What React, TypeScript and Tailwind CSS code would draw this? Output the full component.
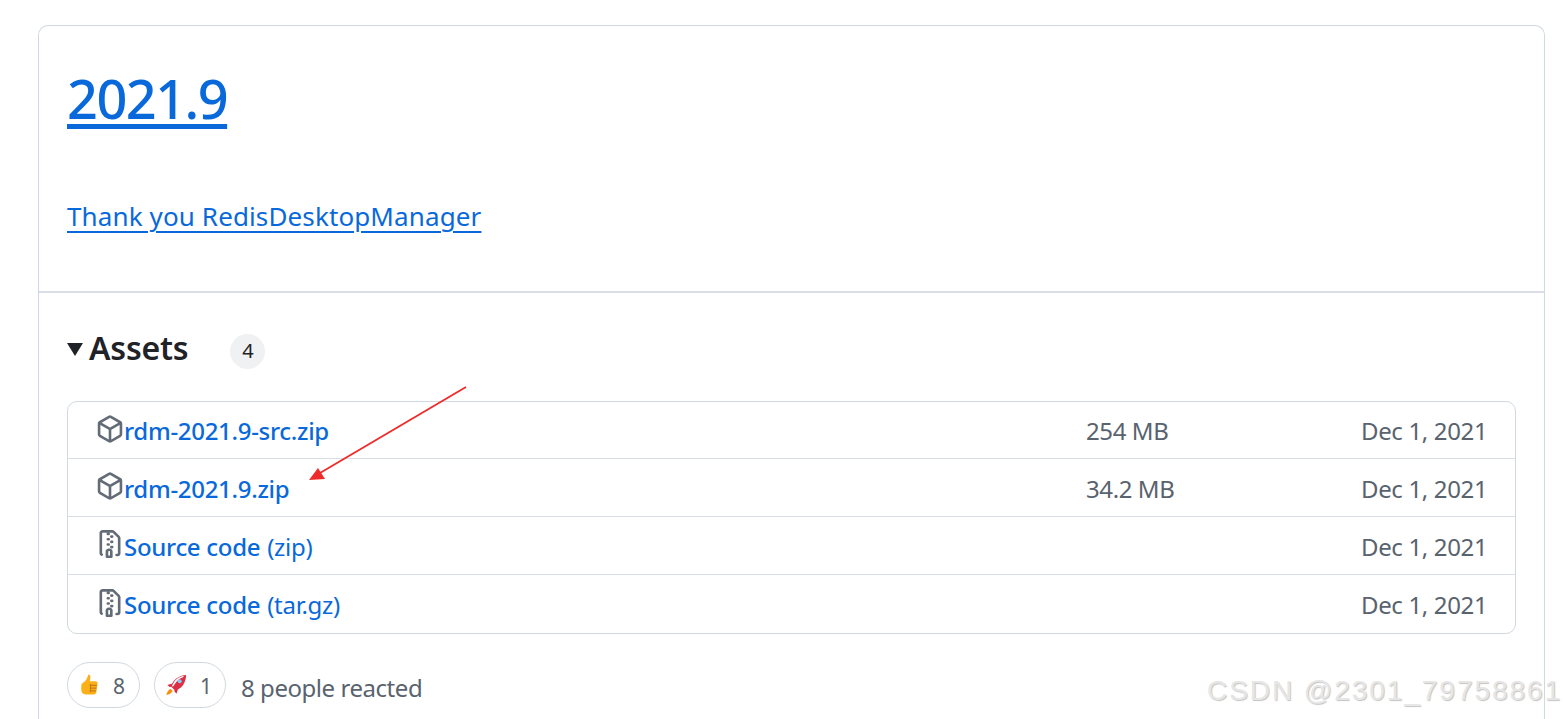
const PKG = "m8.878.392 5.25 3.045c.54.314.872.89.872 1.514v6.098a1.75 1.75 0 0 1-.872 1.514l-5.25 3.045a1.75 1.75 0 0 1-1.756 0l-5.25-3.045A1.75 1.75 0 0 1 1 11.049V4.951c0-.624.332-1.201.872-1.514L7.122.392a1.75 1.75 0 0 1 1.756 0ZM7.875 1.69l-4.63 2.685L8 7.133l4.755-2.758-4.63-2.685a.248.248 0 0 0-.25 0ZM2.5 5.677v5.372c0 .09.047.171.125.216l4.625 2.683V8.432Zm6.25 8.271 4.625-2.683a.25.25 0 0 0 .125-.216V5.677L8.75 8.432Z";
const ZIP = "M3.5 1.75v11.5c0 .09.048.173.126.217a.75.75 0 0 1-.752 1.298A1.748 1.748 0 0 1 2 13.25V1.75C2 .784 2.784 0 3.75 0h5.586c.464 0 .909.185 1.237.513l2.914 2.914c.329.328.513.773.513 1.237v8.586A1.75 1.75 0 0 1 12.25 15h-.5a.75.75 0 0 1 0-1.5h.5a.25.25 0 0 0 .25-.25V4.664a.25.25 0 0 0-.073-.177L9.513 1.573a.25.25 0 0 0-.177-.073H7.25a.75.75 0 0 1 0 1.5h-.5a.75.75 0 0 1 0-1.5h-3a.25.25 0 0 0-.25.25Zm3.75 8.75h.5c.966 0 1.75.784 1.75 1.75v3a.75.75 0 0 1-.75.75h-2.5a.75.75 0 0 1-.75-.75v-3c0-.966.784-1.75 1.75-1.75ZM6 5.25a.75.75 0 0 1 .75-.75h.5a.75.75 0 0 1 0 1.5h-.5A.75.75 0 0 1 6 5.25Zm.75 2.25h.5a.75.75 0 0 1 0 1.5h-.5a.75.75 0 0 1 0-1.5ZM8 6.75A.75.75 0 0 1 8.75 6h.5a.75.75 0 0 1 0 1.5h-.5A.75.75 0 0 1 8 6.75ZM8.75 3h.5a.75.75 0 0 1 0 1.5h-.5a.75.75 0 0 1 0-1.5ZM8 9.75A.75.75 0 0 1 8.75 9h.5a.75.75 0 0 1 0 1.5h-.5A.75.75 0 0 1 8 9.75Zm-1 2.5v2.25h1v-2.25a.25.25 0 0 0-.25-.25h-.5a.25.25 0 0 0-.25.25Z";

const rows = [
  { icon: PKG, name: "rdm-2021.9-src.zip", extra: "", size: "254 MB", h: "h-[56px]" },
  { icon: PKG, name: "rdm-2021.9.zip", extra: "", size: "34.2 MB", h: "h-[58px]" },
  { icon: ZIP, name: "Source code", extra: "(zip)", size: "", h: "h-[58px]" },
  { icon: ZIP, name: "Source code", extra: "(tar.gz)", size: "", h: "h-[59px]" },
];

function Thumb() {
  return (
    <svg viewBox="0 0 20 24" className="w-[19px] h-[22px]">
      <path fill="#fbb018" d="M8.5 1c1.6-.6 2.8.7 2.5 2.4L10.4 8h6.2c1.6 0 2.4 1.2 2.2 2.5l-1.3 9.2c-.3 1.6-1.2 2.6-3 2.6H6c-3 0-5-1.8-5-5v-4c0-2 1-3.3 2.6-4.2C6 7.600 7.500 4.500 8.500 1Z" />
      <path fill="none" stroke="#c77c0e" strokeWidth="1.300" d="M11 12.500h7M11 15.500h6.500M11 18.500h6M11 11v9" />
    </svg>
  );
}

function Rocket() {
  return (
    <svg viewBox="0 0 24 24" className="w-[22px] h-[22px]">
      <path fill="#f4900c" d="M6 16l2.500 2.500C7 21 4.500 22.500 1.500 23c.4-3 2-5.500 4.500-7Z" />
      <path fill="#dd2e44" d="M7 10.500 2.500 12l3 2.500 3-2ZM14 17l-1.500 4.500-2.500-3 2-3Z" />
      <path fill="#dd2e44" d="M23 1c-5.500.2-10 2.500-13.500 6.500L6 13l5.500 5.500 5.500-3.500C21 11.500 23 6.500 23 1Z" />
      <path fill="#f5f8fa" d="M19.500 2.200c-3.500.8-6.500 2.600-9 5.300L7.500 12.700l1.200 1.200 3.600-5.100c2-2.500 4.500-4.400 7.500-5.200l.7-1.400Z" />
      <circle cx="16" cy="8" r="2.200" fill="#88c9f9" />
    </svg>
  );
}

export default function App() {
  return (
    <div className="relative h-[719px] w-[1566px] overflow-hidden bg-white pl-[38px] pt-[25px] font-['Noto_Sans','Open_Sans',sans-serif]">
      <div className="h-[720px] w-[1507px] rounded-t-[10px] border border-b-0 border-[#d1d9e0]">
        <div className="h-[267px] border-b-2 border-[#d8dee4] pl-[28px]">
          <a className="block pt-[36px] text-[54px] leading-[72px] font-medium tracking-[-1.500px] text-[#0969da] underline decoration-[4.500px] underline-offset-[5px]">
            2021.9
          </a>
          <a className="mt-[62px] block text-[26px] leading-[40px] tracking-[0.120px] text-[#0969da] underline decoration-[1.500px] underline-offset-[5px]">
            Thank you RedisDesktopManager
          </a>
        </div>

        <div className="px-[28px]">
          <div className="flex h-[108px] items-center pt-[1px]">
            <span className="mr-[6px] mt-[3px] h-0 w-0 border-x-[8px] border-t-[13px] border-x-transparent border-t-[#1f2328]" />
            <span className="text-[32px] leading-[40px] font-semibold tracking-[-0.200px] text-[#1f2328]">Assets</span>
            <span className="ml-[42px] mt-[7px] flex h-[35px] w-[35px] items-center justify-center rounded-full bg-[#eff1f3] text-[20px] text-[#1f2328]">4</span>
          </div>

          <div className="rounded-[10px] border border-[#d1d9e0]">
            {rows.map((r, i) => (
              <div key={i} className={`flex ${r.h} items-center pl-[28px] pr-[30px] pt-[2px] ${i > 0 ? "border-t border-[#d8dee4]" : ""}`}>
                <div className="flex flex-1 items-center">
                  <svg viewBox="0 0 16 16" className="mb-[5px] h-[28px] w-[28px] shrink-0 text-[#636c76]" fill="currentColor">
                    <path d={r.icon} />
                  </svg>
                  <a className="whitespace-nowrap text-[24px] font-medium tracking-[-0.300px] text-[#0969da]">{r.name}</a>
                  {r.extra && <span className="ml-[7px] text-[24px] tracking-[-0.300px] text-[#0969da]">{r.extra}</span>}
                </div>
                <span className="w-[275px] text-[24px] tracking-[-0.400px] text-[#59636e]">{r.size}</span>
                <span className="w-[124px] whitespace-nowrap text-right text-[24px] tracking-[-0.350px] text-[#59636e]">Dec 1, 2021</span>
              </div>
            ))}
          </div>

          <div className="mt-[28px] flex items-center">
            <div className="flex h-[46px] w-[73px] items-center gap-[14px] rounded-full border border-[#d1d9e0] pl-[12px]">
              <Thumb />
              <span className="pt-[3px] text-[21px] text-[#59636e]">8</span>
            </div>
            <div className="ml-[14px] flex h-[46px] w-[72px] items-center gap-[13px] rounded-full border border-[#d1d9e0] pl-[10px]">
              <Rocket />
              <span className="pt-[3px] text-[21px] text-[#59636e]">1</span>
            </div>
            <span className="ml-[15px] mt-[6px] text-[24px] tracking-[-0.450px] text-[#59636e]">8 people reacted</span>
          </div>
        </div>
      </div>

      <svg className="absolute left-[300px] top-[380px] h-[110px] w-[175px]" viewBox="0 0 175 110">
        <path d="M166 7 20 93" stroke="#ee2a2a" strokeWidth="1.800" fill="none" />
        <path d="M9 100 18 88 25 99Z" fill="#ee2a2a" />
      </svg>
      <span className="absolute left-[1207px] top-[673px] whitespace-nowrap font-['Liberation_Sans',sans-serif] text-[28px] leading-[36px] tracking-[1.950px] text-[#e6e6e6] [text-shadow:1px_1px_1px_#c4c4c4]">
        CSDN @2301_79758861
      </span>
    </div>
  );
}
